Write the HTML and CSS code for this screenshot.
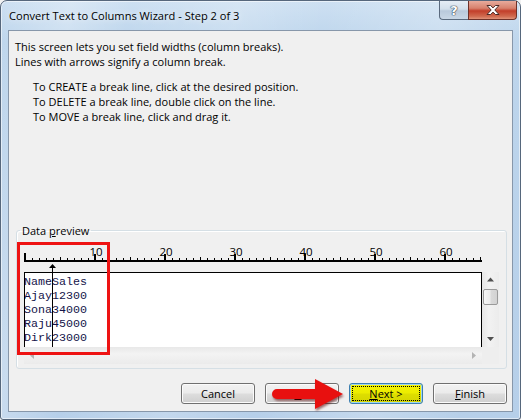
FILE: index.html
```html
<!DOCTYPE html>
<html lang="en">
<head>
<meta charset="utf-8">
<title>Convert Text to Columns Wizard - Step 2 of 3</title>
<link rel="stylesheet" href="styles.css">
</head>
<body>
<div class="window">
  <div class="titlebar">
    <span class="title">Convert Text to Columns Wizard - Step 2 of 3</span>
    <div class="caption">
      <span class="cap-btn help">?</span>
      <span class="cap-btn close"><svg width="14" height="10" viewBox="0 0 14 10"><path d="M1 0.5h3.6l2.4 2.4 2.4-2.4h3.6l-4.2 4.5 4.2 4.5h-3.6l-2.4-2.4-2.4 2.4h-3.6l4.2-4.5z" fill="#fff" stroke="#4a2a26" stroke-width="1" stroke-linejoin="round"/></svg></span>
    </div>
  </div>
  <div class="client">
    <p class="intro">This screen lets you set field widths (column breaks).<br>Lines with arrows signify a column break.</p>
    <p class="howto">To CREATE a break line, click at the desired position.<br>To DELETE a break line, double click on the line.<br>To MOVE a break line, click and drag it.</p>
    <fieldset class="group">
      <legend>Data <u>p</u>review</legend>
      <svg class="ruler" width="458" height="30" viewBox="0 0 458 30">
        <defs>
          <pattern id="tk" x="1" y="0" width="7" height="30" patternUnits="userSpaceOnUse">
            <rect x="0" y="16" width="1" height="2" fill="#000"/>
          </pattern>
        </defs>
        <rect x="0" y="0" width="458" height="30" fill="url(#tk)"/>
        <rect x="0" y="18" width="458" height="2" fill="#000"/>
        <g fill="#000">
          <rect x="0" y="11" width="2" height="7"/>
          <rect x="70" y="12" width="2" height="6"/>
          <rect x="140" y="12" width="2" height="6"/>
          <rect x="210" y="12" width="2" height="6"/>
          <rect x="280" y="12" width="2" height="6"/>
          <rect x="350" y="12" width="2" height="6"/>
          <rect x="420" y="12" width="2" height="6"/>
          <rect x="36" y="15" width="1" height="3"/>
          <rect x="106" y="15" width="1" height="3"/>
          <rect x="176" y="15" width="1" height="3"/>
          <rect x="246" y="15" width="1" height="3"/>
          <rect x="316" y="15" width="1" height="3"/>
          <rect x="386" y="15" width="1" height="3"/>
          <rect x="456" y="15" width="1" height="3"/>
          <polygon points="28.5,22 25,26 32,26"/>
          <rect x="28" y="26" width="1" height="4"/>
        </g>
        <g class="nums">
          <text x="72" y="14">10</text>
          <text x="142" y="14">20</text>
          <text x="212" y="14">30</text>
          <text x="282" y="14">40</text>
          <text x="352" y="14">50</text>
          <text x="422" y="14">60</text>
        </g>
      </svg>
      <div class="preview">
        <div class="pv-box">
<pre class="pv-text">NameSales
Ajay12300
Sona34000
Raju45000
Dirk23000</pre>
          <span class="break-line"></span>
        </div>
        <div class="vscroll">
          <svg class="sb-arrow" width="17" height="17" viewBox="0 0 17 17"><polygon points="8.5,5.5 5,9.5 12,9.5" fill="#505050"/></svg>
          <span class="thumb"></span>
          <span class="sb-space"></span>
          <svg class="sb-arrow" width="17" height="17" viewBox="0 0 17 17"><polygon points="5,7 12,7 8.5,11" fill="#505050"/></svg>
        </div>
        <div class="hscroll">
          <svg class="sb-arrow" width="17" height="17" viewBox="0 0 17 17"><polygon points="6,8.5 10,5 10,12" fill="#b4b4b4"/></svg>
          <svg class="sb-arrow" width="17" height="17" viewBox="0 0 17 17"><polygon points="7,5 11,8.5 7,12" fill="#b4b4b4"/></svg>
        </div>
        <div class="corner"></div>
      </div>
    </fieldset>
    <div class="buttons">
      <button class="btn" type="button">Cancel</button>
      <button class="btn" type="button">&lt; <u>B</u>ack</button>
      <button class="btn next" type="button"><span class="focus"><u>N</u>ext &gt;</span></button>
      <button class="btn" type="button"><u>F</u>inish</button>
    </div>
  </div>
  <div class="highlight"></div>
  <svg class="pointer" width="80" height="40" viewBox="0 0 80 40">
    <path d="M7 13 H47 V23 H7 A5 5 0 0 1 7 13 Z" fill="#e8100f"/>
    <polygon points="45,3 73,18 45,33" fill="#e8100f"/>
  </svg>
</div>
</body>
</html>
```

FILE: styles.css
```css
* { box-sizing: border-box; }
html, body {
  margin: 0;
  padding: 0;
  background: #f2f2f2;
  width: 521px;
  height: 420px;
  overflow: hidden;
}
body {
  font-family: "Open Sans", "Noto Sans", "Liberation Sans", sans-serif;
  font-size: 11px;
  color: #000;
}
.window {
  position: relative;
  width: 521px;
  height: 420px;
  border: 1px solid #56677c;
  border-radius: 7px 7px 3px 3px;
  background:
    linear-gradient(100deg, rgba(255,255,255,0) 0%, rgba(255,255,255,.25) 12%, rgba(255,255,255,0) 22%, rgba(255,255,255,.18) 40%, rgba(255,255,255,0) 55%, rgba(255,255,255,.2) 75%, rgba(255,255,255,0) 90%),
    linear-gradient(to bottom, #cde0f2 0%, #bdd5ec 40px, #b6cfe9 100%);
  box-shadow: inset 0 0 0 1px rgba(255,255,255,.55);
  padding: 0 7px 7px 7px;
}
.titlebar {
  display: flex;
  justify-content: space-between;
  align-items: flex-start;
  height: 29px;
  margin: 0 -7px;
  padding-left: 8px;
}
.title {
  padding-top: 7px;
  font-size: 11.1px;
  line-height: 15px;
  color: #000;
  text-shadow: 0 0 6px rgba(255,255,255,.9);
}
.caption {
  display: flex;
  margin-right: 3px;
}
.cap-btn {
  display: flex;
  align-items: center;
  justify-content: center;
  height: 19px;
  border: 1px solid #5a6a7e;
  border-top: none;
}
.help {
  width: 29px;
  border-right: none;
  border-radius: 0 0 0 4px;
  background: linear-gradient(to bottom, #e6edf5 0%, #d3dfeb 45%, #b9c9db 55%, #c9d7e6 100%);
  color: #fff;
  font-family: "DejaVu Sans", sans-serif;
  font-weight: bold;
  font-size: 13px;
  line-height: 1;
  text-shadow: 0 0 1px #2c3a4c, 0 0 1px #2c3a4c, 0 0 1px #2c3a4c;
}
.close {
  width: 49px;
  border-color: #6e3129;
  border-radius: 0 0 4px 0;
  background: linear-gradient(to bottom, #e8ab9c 0%, #d7816d 40%, #c23e2a 55%, #d06a4f 85%, #e0937a 100%);
}
.client {
  height: 382px;
  border: 1px solid #8797aa;
  background: #f0f0f0;
}
.intro, .howto {
  margin: 0;
  line-height: 15px;
}
.intro { margin: 8px 0 0 6px; }
.howto { margin: 10px 0 0 24px; }
.group {
  margin: 99px 5px 0 7px;
  padding: 4px 7px 4px 7px;
  border: 1px solid #d5dfe5;
  border-radius: 3px;
  min-width: 0;
  box-shadow: inset 1px 1px 0 #fff;
}
.group legend {
  padding: 0 2px;
  margin-left: -4px;
  line-height: 15px;
}
.ruler { display: block; }
.nums text {
  font-family: "Open Sans", "Noto Sans", sans-serif;
  font-size: 11.5px;
  text-anchor: middle;
  fill: #000;
}
.preview {
  display: grid;
  grid-template-columns: 458px 17px;
  grid-template-rows: 75px 17px;
}
.pv-box {
  position: relative;
  background: #fff;
  border: 1px solid #000;
  border-bottom: none;
  overflow: hidden;
}
.pv-text {
  margin: 0 0 0 -1px;
  padding-top: 2px;
  font-family: "Liberation Mono", "Courier New", monospace;
  font-size: 11.67px;
  line-height: 14px;
  color: #14144a;
}
.break-line {
  position: absolute;
  left: 27px;
  top: 0;
  bottom: 0;
  width: 1px;
  background: #000;
}
.vscroll {
  display: flex;
  flex-direction: column;
  background: linear-gradient(to right, #e6e6e6, #f2f2f2 40%, #ececec);
}
.sb-arrow { display: block; flex: none; }
.thumb {
  flex: none;
  height: 16px;
  margin: 0 1px;
  border: 1px solid #9a9a9a;
  border-radius: 2px;
  background: linear-gradient(to right, #f7f7f7 0%, #ececec 45%, #d9d9d9 55%, #d2d2d2 100%);
}
.sb-space { flex: 1; }
.hscroll {
  display: flex;
  justify-content: space-between;
  background: linear-gradient(to bottom, #e8e8e8, #f3f3f3 40%, #ebebeb);
}
.corner { background: #eeeeee; }
.buttons {
  display: flex;
  justify-content: flex-end;
  gap: 10px;
  margin: 14px 5px 0 0;
}
.btn {
  width: 74px;
  height: 21px;
  padding: 0;
  border: 1px solid #707070;
  border-radius: 3px;
  background: linear-gradient(to bottom, #f2f2f2 0%, #ebebeb 48%, #dddddd 52%, #cfcfcf 100%);
  box-shadow: inset 0 0 0 1px #fbfbfb;
  font-family: "Open Sans", "Noto Sans", sans-serif;
  font-size: 11px;
  line-height: 15px;
  color: #000;
}
.btn u { text-decoration-thickness: 1px; text-underline-offset: 1px; }
.next {
  border-color: #3c7fb1;
  background: linear-gradient(to bottom, #f4f400 0%, #ecec00 48%, #dede00 52%, #d4d400 100%);
  box-shadow: inset 0 0 0 1px #9fd5f0;
}
.focus {
  display: block;
  margin: 2px;
  height: 15px;
  border: 1px dotted #000;
  line-height: 13px;
}
.highlight {
  position: absolute;
  left: 16px;
  top: 241px;
  width: 93px;
  height: 113px;
  border: 3px solid #ee1313;
}
.pointer {
  position: absolute;
  left: 269px;
  top: 375px;
  filter: drop-shadow(1px 2px 1px rgba(90,0,0,.55));
}
```
